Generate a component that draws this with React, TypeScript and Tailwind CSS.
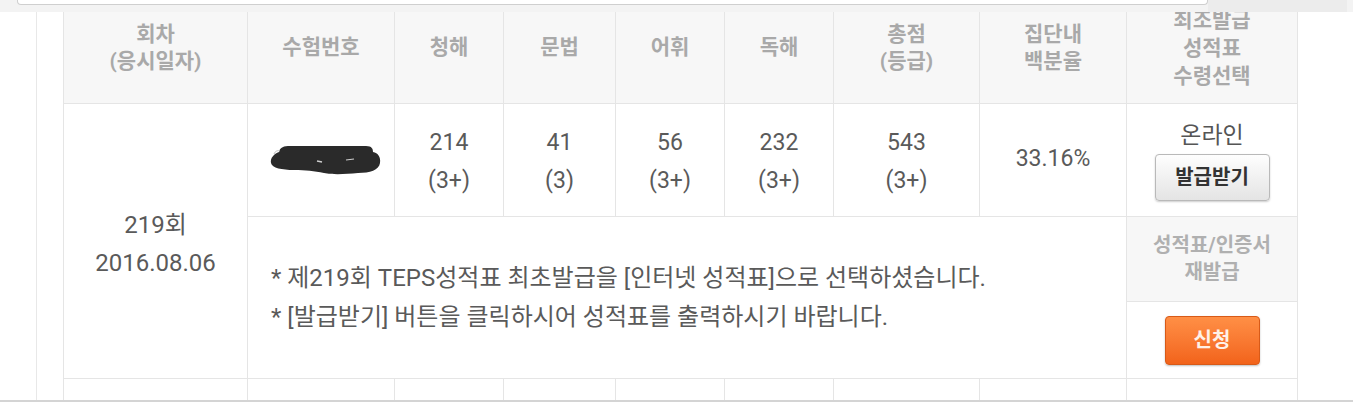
import React from 'react'

const FONT = '"Roboto", "Noto Sans CJK KR", "Noto Sans", sans-serif'

// header cells: light grey, bold, muted text
function Th({ children }: { children: React.ReactNode }) {
  return (
    <th className="border border-[#e5e5e5] bg-[#f7f7f7] text-[21px] leading-[27px] font-bold text-[#a9a9a9] align-middle text-center">
      {children}
    </th>
  )
}

function Score({ value, grade }: { value: string; grade: string }) {
  return (
    <td className="border border-[#e5e5e5] text-center align-middle pt-[4px] text-[23px] leading-[38px] text-[#5a5a5a]">
      {value}
      <br />
      {grade}
    </td>
  )
}

// scribble that hides the registration number
function Redacted() {
  return (
    <svg width="112" height="34" viewBox="0 0 112 34" className="ml-[22px]">
      <path
        d="M9 9 C10 4 14 3 20 3 L96 3 C102 3 103 6 103 9 C108 10 111 14 110 20 C109 27 100 30 88 30 C76 31 64 32 54 30 C44 28 36 27 24 27 C12 27 2 25 1 20 C0 15 4 11 9 9 Z"
        fill="#2a2a2a"
      />
      <path d="M4 11 C5 8 8 7 10 8" stroke="#bdbdbd" strokeWidth="1" fill="none" />
      <path d="M47 18 L52 19" stroke="#cfcfcf" strokeWidth="1.5" />
      <path d="M76 17 L84 16" stroke="#cfcfcf" strokeWidth="1.2" />
    </svg>
  )
}

export default function App() {
  return (
    <div className="w-[1353px] h-[410px] overflow-hidden bg-white flex flex-col" style={{ fontFamily: FONT }}>
      {/* browser-ish top strip */}
      <div className="h-[12px] shrink-0 bg-[#f3f3f3] flex">
        <div className="w-[17px]" />
        <div className="w-[1191px] h-[5px] bg-white border border-t-0 border-[#cfcfcf] rounded-b-[4px]" />
        <div className="w-[139px] h-[12px] bg-[#ececec]" />
      </div>

      <div className="h-[388px] shrink-0 overflow-hidden flex">
        <div className="w-[36px] shrink-0" />
        <div className="border-l border-[#e8e8e8] pl-[26px]">
          <table className="border-collapse table-fixed -mt-[21px] w-[1234px]">
            <colgroup>
              <col className="w-[184px]" />
              <col className="w-[147px]" />
              <col className="w-[109px]" />
              <col className="w-[112px]" />
              <col className="w-[109px]" />
              <col className="w-[109px]" />
              <col className="w-[146px]" />
              <col className="w-[147px]" />
              <col className="w-[171px]" />
            </colgroup>
            <tbody>
              <tr className="h-[112px]">
                <Th>
                  회차
                  <br />
                  (응시일자)
                </Th>
                <Th>수험번호</Th>
                <Th>청해</Th>
                <Th>문법</Th>
                <Th>어휘</Th>
                <Th>독해</Th>
                <Th>
                  총점
                  <br />
                  (등급)
                </Th>
                <Th>
                  집단내
                  <br />
                  백분율
                </Th>
                <th className="border border-[#e5e5e5] bg-[#f7f7f7] text-[21px] leading-[28px] font-bold text-[#a9a9a9] text-center align-middle">
                  최조발급
                  <br />
                  성적표
                  <br />
                  수령선택
                </th>
              </tr>

              <tr className="h-[113px]">
                <td
                  rowSpan={3}
                  className="border border-[#e5e5e5] text-center align-middle pt-[6px] text-[24px] leading-[38px] text-[#5a5a5a]"
                >
                  219회
                  <br />
                  2016.08.06
                </td>
                <td className="border border-[#e5e5e5] align-middle">
                  <Redacted />
                </td>
                <Score value="214" grade="(3+)" />
                <Score value="41" grade="(3)" />
                <Score value="56" grade="(3+)" />
                <Score value="232" grade="(3+)" />
                <Score value="543" grade="(3+)" />
                <td className="border border-[#e5e5e5] text-center align-middle text-[23px] text-[#5a5a5a] pb-[2px]">
                  33.16%
                </td>
                <td className="border border-[#e5e5e5] text-center align-middle">
                  <div className="flex flex-col items-center gap-[4px] pt-[2px]">
                    <span className="text-[23px] leading-[28px] text-[#555]">온라인</span>
                    <button className="w-[115px] h-[47px] rounded-[4px] border border-[#b9b9b9] bg-gradient-to-b from-[#fefefe] to-[#e4e4e4] shadow-[0_1px_2px_rgba(0,0,0,0.2)] text-[20px] font-bold text-[#333]">
                      발급받기
                    </button>
                  </div>
                </td>
              </tr>

              <tr className="h-[85px]">
                <td
                  colSpan={7}
                  rowSpan={2}
                  className="border border-[#e5e5e5] align-middle pl-[23px] text-[24px] leading-[39px] text-[#5a5a5a]"
                >
                  * 제219회 TEPS성적표 최초발급을 [인터넷 성적표]으로 선택하셨습니다.
                  <br />* [발급받기] 버튼을 클릭하시어 성적표를 출력하시기 바랍니다.
                </td>
                <td className="border border-[#e5e5e5] bg-[#f7f7f7] text-center align-middle text-[20px] leading-[27px] font-bold text-[#b0b0b0]">
                  성적표/인증서
                  <br />
                  재발급
                </td>
              </tr>

              <tr className="h-[77px]">
                <td className="border border-[#e5e5e5] text-center align-middle">
                  <button className="w-[95px] h-[49px] rounded-[4px] border border-[#d85a18] bg-gradient-to-b from-[#ff8f45] to-[#f2631a] shadow-[0_1px_2px_rgba(0,0,0,0.25)] text-[20px] font-bold text-[#fff1e8]">
                    신청
                  </button>
                </td>
              </tr>

              <tr className="h-[40px]">
                <td className="border border-[#e5e5e5]" />
                <td className="border border-[#e5e5e5]" />
                <td className="border border-[#e5e5e5]" />
                <td className="border border-[#e5e5e5]" />
                <td className="border border-[#e5e5e5]" />
                <td className="border border-[#e5e5e5]" />
                <td className="border border-[#e5e5e5]" />
                <td className="border border-[#e5e5e5]" />
                <td className="border border-[#e5e5e5]" />
              </tr>
            </tbody>
          </table>
        </div>
      </div>

      <div className="h-[2px] shrink-0 bg-[#d4d4d4]" />
      <div className="flex-1 bg-white" />
    </div>
  )
}
